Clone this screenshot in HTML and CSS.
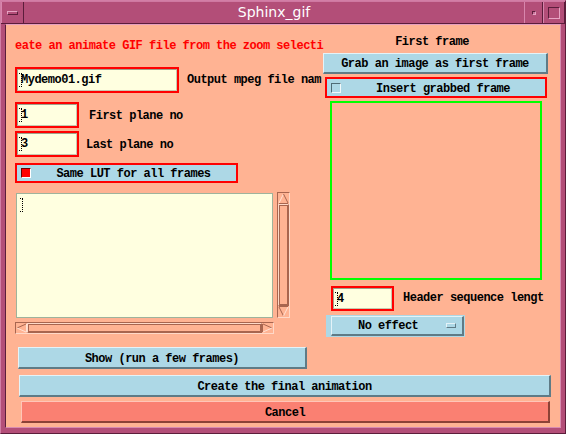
FILE: index.html
```html
<!DOCTYPE html>
<html>
<head>
<meta charset="utf-8">
<title>Sphinx_gif</title>
<link rel="stylesheet" href="styles.css">
</head>
<body>
<div class="window">
  <div class="titlebar">
    <div class="tb-btn tb-menu"><span class="tb-bar"></span></div>
    <div class="tb-title">Sphinx_gif</div>
    <div class="tb-btn tb-min"><span class="tb-dot"></span></div>
    <div class="tb-btn tb-max"><span class="tb-square"></span></div>
  </div>
  <div class="content">
    <div class="top">
      <div class="col-left">
        <div class="heading">eate an animate GIF file from the zoom selecti</div>

        <div class="row row-output">
          <div class="hl hl-wide"><div class="field"><svg class="caret" width="4" height="14" viewBox="0 0 4 14"><path d="M0 0.5h4M2 1v12M0 13.5h4" stroke="#000" stroke-dasharray="1 1"/></svg><span>Mydemo01.gif</span></div></div>
          <span class="label label-output">Output mpeg file nam</span>
        </div>

        <div class="row row-first">
          <div class="hl hl-small"><div class="field"><svg class="caret" width="4" height="14" viewBox="0 0 4 14"><path d="M0 0.5h4M2 1v12M0 13.5h4" stroke="#000" stroke-dasharray="1 1"/></svg><span>1</span></div></div>
          <span class="label label-first">First plane no</span>
        </div>

        <div class="row row-last">
          <div class="hl hl-small"><div class="field"><svg class="caret" width="4" height="14" viewBox="0 0 4 14"><path d="M0 0.5h4M2 1v12M0 13.5h4" stroke="#000" stroke-dasharray="1 1"/></svg><span>3</span></div></div>
          <span class="label label-last">Last plane no</span>
        </div>

        <div class="toggle toggle-lut">
          <span class="indicator on"></span>
          <span class="toggle-text">Same LUT for all frames</span>
        </div>

        <div class="text-row">
          <div class="textarea"><svg class="caret" width="4" height="14" viewBox="0 0 4 14"><path d="M0 0.5h4M2 1v12M0 13.5h4" stroke="#000" stroke-dasharray="1 1"/></svg></div>
          <div class="vscroll">
            <svg class="arrow-v" width="11" height="11" viewBox="0 0 11 11"><polygon points="5.5,1 10,10 1,10" fill="#ffb393"/><path d="M5.5 1L1 10" stroke="#ffe2d4" fill="none"/><path d="M5.5 1L10 10M1 10.5H10" stroke="#a8654f" fill="none"/></svg>
            <div class="slider"></div>
            <svg class="arrow-v" width="11" height="11" viewBox="0 0 11 11"><polygon points="1,1 10,1 5.5,10" fill="#ffb393"/><path d="M1 0.5H10M1 1L5.5 10" stroke="#a8654f" fill="none"/><path d="M10 1L5.5 10" stroke="#ffe2d4" fill="none"/></svg>
          </div>
        </div>

        <div class="hscroll">
          <svg class="arrow-h" width="11" height="10" viewBox="0 0 11 10"><polygon points="1,5 10,1 10,9" fill="#ffb393"/><path d="M1 5L10 1" stroke="#a8654f" fill="none"/><path d="M1 5L10 9M10.5 1V9" stroke="#ffe2d4" fill="none"/></svg>
          <div class="slider"></div>
          <svg class="arrow-h" width="11" height="10" viewBox="0 0 11 10"><polygon points="1,1 10,5 1,9" fill="#ffb393"/><path d="M0.5 1V9M1 1L10 5" stroke="#a8654f" fill="none"/><path d="M10 5L1 9" stroke="#ffe2d4" fill="none"/></svg>
        </div>
      </div>

      <div class="col-right">
        <div class="frame-label">First frame</div>
        <div class="btn btn-grab">Grab an image as first frame</div>
        <div class="toggle toggle-insert">
          <span class="indicator"></span>
          <span class="toggle-text">Insert grabbed frame</span>
        </div>
        <div class="preview"></div>
        <div class="row row-header">
          <div class="hl hl-header"><div class="field"><svg class="caret" width="4" height="14" viewBox="0 0 4 14"><path d="M0 0.5h4M2 1v12M0 13.5h4" stroke="#000" stroke-dasharray="1 1"/></svg><span>4</span></div></div>
          <span class="label label-header">Header sequence lengt</span>
        </div>
        <div class="option">
          <div class="option-btn">
            <span class="option-text">No effect</span>
            <span class="option-mark"></span>
          </div>
        </div>
      </div>
    </div>

    <div class="actions">
      <div class="btn btn-show">Show (run a few frames)</div>
      <div class="btn btn-create">Create the final animation</div>
      <div class="btn btn-cancel">Cancel</div>
    </div>
  </div>
</div>
</body>
</html>
```

FILE: styles.css
```css
* { box-sizing: border-box; }

html, body {
  margin: 0;
  padding: 0;
}

body {
  width: 566px;
  height: 434px;
  overflow: hidden;
  background: #b34e78;
  font-family: "Liberation Mono", "DejaVu Sans Mono", monospace;
  font-weight: bold;
  font-size: 12px;
  letter-spacing: -0.5px;
  color: #000;
}

.window {
  width: 566px;
  height: 434px;
  background: #b34e78;
  border: 1px solid;
  border-color: #d27ea6 #5c1d3b #5c1d3b #d27ea6;
  padding: 0 4px 5px 4px;
  display: flex;
  flex-direction: column;
}

/* ---------- title bar ---------- */
.titlebar {
  height: 23px;
  margin: 0 -4px;
  display: flex;
  border-top: 1px solid #cf78a1;
  border-bottom: 1px solid #5c1d3b;
}

.tb-btn {
  display: flex;
  align-items: center;
  justify-content: center;
  border-left: 1px solid #d886ad;
  border-right: 1px solid #5c1d3b;
}

.tb-menu { width: 23px; }
.tb-min { width: 19px; }
.tb-max { width: 22px; }

.tb-bar {
  width: 11px;
  height: 4px;
  border-top: 1px solid #e7a3c3;
  border-bottom: 1px solid #5c1d3b;
  border-left: 1px solid #e7a3c3;
  border-right: 1px solid #5c1d3b;
}

.tb-dot {
  width: 4px;
  height: 4px;
  border-top: 1px solid #5c1d3b;
  border-left: 1px solid #5c1d3b;
  border-bottom: 1px solid #e7a3c3;
  border-right: 1px solid #e7a3c3;
  background: #c8729a;
}

.tb-square {
  width: 12px;
  height: 12px;
  border-top: 1px solid #5c1d3b;
  border-left: 1px solid #5c1d3b;
  border-bottom: 1px solid #e7a3c3;
  border-right: 1px solid #e7a3c3;
}

.tb-title {
  flex: 1;
  text-align: center;
  color: #ffffff;
  font-family: "DejaVu Sans", sans-serif;
  font-weight: normal;
  font-size: 14px;
  letter-spacing: 0;
  line-height: 21px;
}

/* ---------- main panel ---------- */
.content {
  flex: 1;
  background: #ffb393;
  border: 1px solid;
  border-color: #e7a0c0 #d88cb0 #d88cb0 #5c1d3b;
  padding: 8px 0 0 9px;
  display: flex;
  flex-direction: column;
}

.top {
  display: flex;
  align-items: flex-start;
}

.col-left {
  width: 307px;
  padding-top: 5px;
  display: flex;
  flex-direction: column;
  align-items: flex-start;
}

.col-right {
  width: 229px;
  display: flex;
  flex-direction: column;
  align-items: flex-start;
}

.heading {
  height: 16px;
  line-height: 16px;
  color: #ff0000;
  white-space: nowrap;
}

.row {
  display: flex;
  align-items: center;
}

.row-output { margin-top: 13px; }
.row-first { margin-top: 9px; }
.row-last { margin-top: 3px; }

.label {
  white-space: nowrap;
}

.label-output { margin-left: 8px; }
.label-first { margin-left: 10px; padding-top: 2px; }
.label-last { margin-left: 7px; padding-top: 2px; }
.label-header { margin-left: 9px; padding-bottom: 1px; }

/* text fields */
.hl {
  border: 2px solid #ff0000;
  height: 26px;
}

.hl-wide { width: 164px; }
.hl-small { width: 64px; }
.hl-header { width: 63px; height: 25px; }

.field {
  height: 100%;
  background: #ffffe0;
  border: 1px solid;
  border-color: #9fa38c #c7c9b0 #c7c9b0 #9fa38c;
  display: flex;
  align-items: center;
  padding: 0 0 0 1px;
  white-space: nowrap;
}

.caret {
  display: block;
  flex: none;
  margin-right: -2px;
  shape-rendering: crispEdges;
}

/* toggles */
.toggle {
  border: 2px solid #ff0000;
  background: #add8e6;
  display: flex;
  align-items: center;
  padding-left: 4px;
}

.toggle-lut {
  margin-top: 6px;
  width: 223px;
  height: 20px;
}

.toggle-insert {
  margin-top: 3px;
  margin-left: 3px;
  width: 222px;
  height: 21px;
}

.indicator {
  width: 10px;
  height: 10px;
  flex: none;
  border: 1px solid;
  border-color: #4f6c76 #f2fafc #f2fafc #4f6c76;
  background: #add8e6;
}

.indicator.on {
  background: #ff0000;
  border-color: #6a0000 #ffffff #ffffff #6a0000;
}

.toggle-text {
  flex: 1;
  text-align: center;
  white-space: nowrap;
  padding-top: 2px;
}

/* text area + scrollbars */
.text-row {
  margin-top: 10px;
  display: flex;
}

.textarea {
  margin-left: 1px;
  width: 257px;
  height: 125px;
  background: #ffffe0;
  border: 1px solid #9fb39c;
  padding: 4px 3px;
}

.vscroll {
  margin-left: 4px;
  width: 13px;
  height: 126px;
  margin-top: -1px;
  border: 1px solid;
  border-color: #a8654f #ffd9c8 #ffd9c8 #a8654f;
  display: flex;
  flex-direction: column;
}

.arrow-v, .arrow-h {
  display: block;
  flex: none;
}

.vscroll .slider {
  flex: 1;
  border: 1px solid;
  border-color: #ffd9c8 #a8654f #a8654f #ffd9c8;
  outline: 1px solid #a8654f;
  outline-offset: -2px;
}

.hscroll {
  margin-top: 4px;
  width: 259px;
  height: 12px;
  border: 1px solid;
  border-color: #a8654f #ffd9c8 #ffd9c8 #a8654f;
  display: flex;
}

.hscroll .slider {
  flex: 1;
  border: 1px solid;
  border-color: #ffd9c8 #a8654f #a8654f #ffd9c8;
  outline: 1px solid #a8654f;
  outline-offset: -2px;
}

/* right column */
.frame-label {
  width: 220px;
  height: 16px;
  line-height: 16px;
  padding-top: 1px;
  text-align: center;
}

.btn {
  background: #add8e6;
  border-style: solid;
  border-width: 1px 2px 2px 1px;
  border-color: #e4f3f8 #5f7b86 #5f7b86 #e4f3f8;
  display: flex;
  align-items: center;
  justify-content: center;
  white-space: nowrap;
  padding-top: 2px;
}

.btn-grab {
  margin-top: 4px;
  margin-left: 1px;
  width: 225px;
  height: 21px;
}

.preview {
  margin-top: 3px;
  margin-left: 8px;
  width: 212px;
  height: 179px;
  border: 2px solid #00ff00;
}

.row-header {
  margin-top: 6px;
  margin-left: 9px;
}

.option {
  margin-top: 4px;
  margin-left: 4px;
  width: 139px;
  height: 22px;
  background: #add8e6;
  padding: 1px 1px 1px 5px;
}

.option-btn {
  height: 100%;
  border-style: solid;
  border-width: 1px 2px 2px 1px;
  border-color: #e4f3f8 #5f7b86 #5f7b86 #e4f3f8;
  display: flex;
  align-items: center;
  padding-left: 26px;
  padding-right: 6px;
}

.option-text {
  white-space: nowrap;
  padding-top: 1px;
}

.option-mark {
  margin-left: auto;
  width: 10px;
  height: 5px;
  border-style: solid;
  border-width: 1px;
  border-color: #e4f3f8 #5f7b86 #5f7b86 #e4f3f8;
}

/* action buttons */
.actions {
  margin-top: 10px;
  display: flex;
  flex-direction: column;
  align-items: flex-start;
}

.btn-show {
  margin-left: 3px;
  width: 289px;
  height: 22px;
}

.btn-create {
  margin-top: 6px;
  margin-left: 4px;
  width: 532px;
  height: 22px;
}

.btn-cancel {
  margin-top: 4px;
  margin-left: 6px;
  width: 529px;
  height: 22px;
  background: #fa8072;
  border-color: #ffc6b8 #8c4236 #8c4236 #ffc6b8;
}
```
